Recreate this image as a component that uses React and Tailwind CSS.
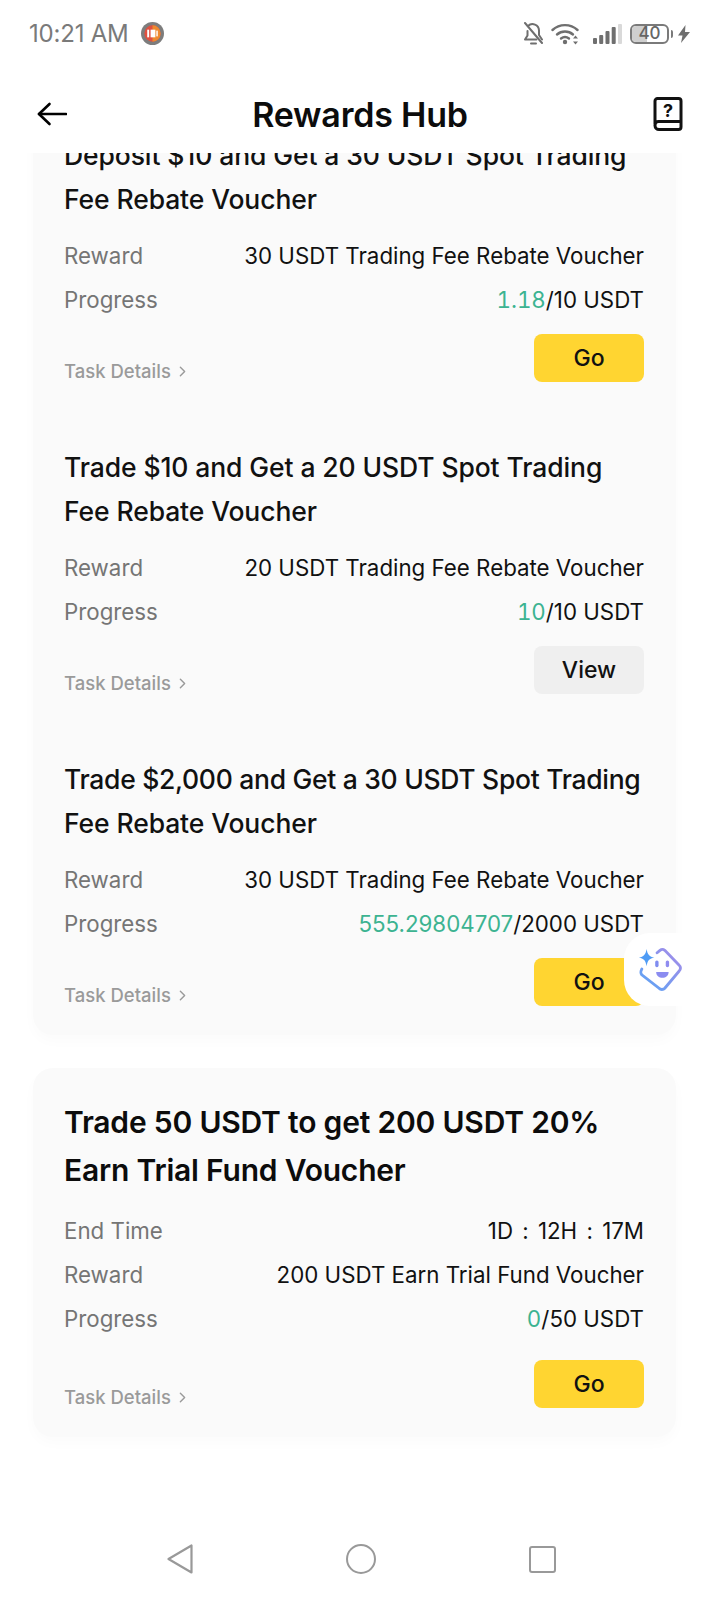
import React from 'react';
import { ChevronRight } from 'lucide-react';

const font = 'font-["Inter","Liberation_Sans",sans-serif]';

const tasks = [
  {
    title: ['Deposit $10 and Get a 30 USDT Spot Trading', 'Fee Rebate Voucher'],
    reward: '30 USDT Trading Fee Rebate Voucher',
    done: '1.18',
    total: '10',
    action: 'Go',
    titleClass: 'tracking-[-0.1px]',
  },
  {
    title: ['Trade $10 and Get a 20 USDT Spot Trading', 'Fee Rebate Voucher'],
    reward: '20 USDT Trading Fee Rebate Voucher',
    done: '10',
    total: '10',
    action: 'View',
    titleClass: 'tracking-[-0.1px]',
  },
  {
    title: ['Trade $2,000 and Get a 30 USDT Spot Trading', 'Fee Rebate Voucher'],
    reward: '30 USDT Trading Fee Rebate Voucher',
    done: '555.29804707',
    total: '2000',
    action: 'Go',
    titleClass: 'tracking-[-0.3px]',
  },
];

const StatusBar = () => (
  <div className="h-[66px] flex items-center justify-between pl-[29px] pr-[30px] pt-[1px] text-[#7a7a7a]">
    <div className="flex items-center gap-[12px]">
      <span className="text-[24px] font-normal tracking-[-0.2px]">10:21 AM</span>
      <svg width="23" height="23" viewBox="0 0 24 24">
        <circle cx="12" cy="12" r="12" fill="#7d7d7d" />
        <circle cx="12" cy="12" r="8.500" fill="#e0503f" />
        <path d="M12 3.500a8.500 8.500 0 0 1 0 17z" fill="#ee8a2f" />
        <rect x="6.500" y="8" width="2" height="8" fill="#fff" />
        <rect x="10" y="8" width="5" height="8" fill="#fff" />
        <rect x="16" y="9" width="1.500" height="6" fill="#fff" />
      </svg>
    </div>
    <div className="flex items-center">
      <svg width="21" height="23" viewBox="0 0 21 23" fill="none" stroke="#6f6f6f" strokeWidth="2" strokeLinecap="round" strokeLinejoin="round">
        <path d="M5 4a6.500 6.500 0 0 1 11 4.500V13l3 4.500M13.500 17.500H2l2.500-4V9" />
        <path d="M8 21.500h5" />
        <path d="M2 1l17 20" />
      </svg>
      <svg className="ml-[7px]" width="28" height="22" viewBox="0 0 28 22" fill="none" stroke="#6f6f6f" strokeWidth="2.400" strokeLinecap="round">
        <path d="M1.500 7c7-6.500 18-6.500 25 0" />
        <path d="M6 11.500c4.500-4 11.500-4 16 0" />
        <path d="M10 15.500c2.500-2 5.500-2 8 0" />
        <circle cx="14" cy="19" r="2.200" fill="#6f6f6f" stroke="none" />
        <path d="M24.500 12.500l2.500 3h-5zM24.500 21.500l2.500-3h-5z" fill="#6f6f6f" stroke="none" />
      </svg>
      <svg className="ml-[14px]" width="29" height="20" viewBox="0 0 29 20">
        <rect x="0" y="14" width="4" height="6" rx="1" fill="#6f6f6f" />
        <rect x="6.200" y="11" width="4" height="9" rx="1" fill="#6f6f6f" />
        <rect x="12.500" y="7" width="4" height="13" rx="1" fill="#6f6f6f" />
        <rect x="18.700" y="3" width="4" height="17" rx="1" fill="#6f6f6f" />
        <rect x="25" y="0" width="4" height="20" rx="1" fill="#d9d9d9" />
      </svg>
      <div className="ml-[8px] relative w-[39px] h-[20px] border-2 border-[#7a7a7a] rounded-[6px] overflow-hidden flex items-center justify-center">
        <div className="absolute left-0 top-0 bottom-0 w-[15px] bg-[#cfcfcf]" />
        <span className="relative text-[17px] leading-none font-medium text-[#666666]">40</span>
      </div>
      <div className="ml-[2px] w-[2px] h-[8px] bg-[#7a7a7a] rounded-r" />
      <svg className="ml-[5px]" width="12" height="18" viewBox="0 0 12 18">
        <path d="M7.500 0L0 10.500h4.500L3 18l9-11H7z" fill="#6f6f6f" />
      </svg>
    </div>
  </div>
);

const Header = () => (
  <div className="h-[87px] relative flex items-center justify-between px-[37px] pt-[9px] bg-white z-10">
    <svg width="30" height="24" viewBox="0 0 30 24" fill="none" stroke="#000" strokeWidth="2.600" strokeLinecap="round" strokeLinejoin="round">
      <path d="M29 12H2" />
      <path d="M12.500 2L2 12l10.500 10" />
    </svg>
    <h1 className="text-[34px] font-semibold text-[#0c0c0c] tracking-[-0.2px]">Rewards Hub</h1>
    <svg width="30" height="34" viewBox="0 0 30 34" fill="none" stroke="#111" strokeWidth="3" strokeLinejoin="round">
      <path d="M2 27V4a2.500 2.500 0 0 1 2.500-2.500h21a2.500 2.500 0 0 1 2.500 2.500v26a2.500 2.500 0 0 1-2.500 2.500H6a4 4 0 0 1-4-4v-.5a3.500 3.500 0 0 1 3.500-3.500H28" />
      <text x="15" y="20" textAnchor="middle" fontSize="18" fontWeight="700" fill="#111" stroke="none">?</text>
    </svg>
  </div>
);

const Row = ({ label, children }) => (
  <div className="h-[44px] flex items-center justify-between text-[22.300px]">
    <span className="text-[#757575]">{label}</span>
    <span className="text-[#111111]">{children}</span>
  </div>
);

const Progress = ({ done, total }) => (
  <Row label="Progress">
    <span className={done.length > 5 ? 'text-[#3cb391]' : 'text-[#3cb391] tabular-nums'}>{done}</span>/{total} USDT
  </Row>
);

const Footer = ({ action }) => (
  <div className="flex items-start justify-between">
    <div className="flex items-center gap-[3px] text-[#9a9a9a] text-[18.500px] leading-[22px] font-medium pt-[26px]">
      Task Details
      <ChevronRight size={17} strokeWidth={2} />
    </div>
    <button
      className={
        action === 'Go'
          ? 'w-[110px] h-[48px] rounded-[8px] bg-[#ffd531] text-[23px] font-medium text-[#111111]'
          : 'w-[110px] h-[48px] rounded-[8px] bg-[#efefef] text-[23px] font-medium text-[#111111]'
      }
    >
      {action}
    </button>
  </div>
);

const TaskItem = ({ task }) => (
  <div className="pt-[22px] pb-[41px] last:pb-[29px]">
    <div className="text-[26.500px] leading-[44px] font-medium text-[#111111] whitespace-nowrap">
      <div className={task.titleClass}>{task.title[0]}</div>
      <div className="tracking-[-0.1px]">{task.title[1]}</div>
    </div>
    <div className="mt-[13px]">
      <Row label="Reward">{task.reward}</Row>
      <Progress done={task.done} total={task.total} />
    </div>
    <div className="mt-[12px]">
      <Footer action={task.action} />
    </div>
  </div>
);

export default function App() {
  return (
    <div className={`${font} w-[720px] h-[1600px] bg-white flex flex-col overflow-hidden relative`}>
      <StatusBar />
      <Header />

      <div className="h-[1337px] overflow-hidden">
        <div className="-mt-[42px] ml-[33px] mr-[44px]">
          <div className="bg-[#fafafa] rounded-[20px] pl-[31px] pr-[32px] shadow-[0_6px_14px_rgba(0,0,0,0.02)]">
            {tasks.map((task) => (
              <TaskItem key={task.title[0]} task={task} />
            ))}
          </div>

          <div className="mt-[33px] bg-[#fafafa] rounded-[20px] pl-[31px] pr-[32px] pt-[30px] pb-[29px] shadow-[0_6px_14px_rgba(0,0,0,0.02)]">
            <div className="text-[30px] leading-[48px] font-semibold text-[#0c0c0c] tracking-[-0.2px] whitespace-nowrap">
              <div>Trade 50 USDT to get 200 USDT 20%</div>
              <div>Earn Trial Fund Voucher</div>
            </div>
            <div className="mt-[15px]">
              <Row label="End Time">
                <span className="[word-spacing:3px] [font-feature-settings:'calt'_0]">1D : 12H : 17M</span>
              </Row>
              <Row label="Reward">200 USDT Earn Trial Fund Voucher</Row>
              <Progress done="0" total="50" />
            </div>
            <div className="mt-[19px]">
              <Footer action="Go" />
            </div>
          </div>
        </div>
      </div>

      <div className="flex-1 flex items-center justify-between pl-[167px] pr-[164px] pt-[28px]">
        <svg width="26" height="30" viewBox="0 0 26 30" fill="none" stroke="#999999" strokeWidth="2.200" strokeLinejoin="round">
          <path d="M24.500 1.500v27L1.500 15z" />
        </svg>
        <div className="w-[30px] h-[30px] rounded-full border-[2.200px] border-[#999999]" />
        <div className="w-[27px] h-[27px] rounded-[3px] border-[2.200px] border-[#999999]" />
      </div>

      {/* AI assistant bubble */}
      <div className="absolute left-[624px] top-[933px] w-[96px] h-[73px] bg-white rounded-l-[26px] flex items-center pl-[13px]">
        <svg width="46" height="46" viewBox="0 0 48 48" fill="none">
          <defs>
            <linearGradient id="bot" x1="0" y1="1" x2="1" y2="0">
              <stop offset="0" stopColor="#5aa5f5" />
              <stop offset="1" stopColor="#a78be8" />
            </linearGradient>
          </defs>
          <path d="M21 6l3-2.500a4 4 0 0 1 5 0L44 19a4 4 0 0 1 0 6L29 43a4 4 0 0 1-6 0L5 29c-1.500-2-1.500-3 0-6" stroke="url(#bot)" strokeWidth="3" strokeLinecap="round" />
          <path d="M10 2c1 6 3 8 8 9-5 1-7 3-8 9-1-6-3-8-8-9 5-1 7-3 8-9z" fill="#4f9cf5" />
          <rect x="19" y="14" width="3.500" height="7" rx="1.700" fill="#7f8cf0" />
          <rect x="30" y="14" width="3.500" height="7" rx="1.700" fill="#8f8cf0" />
          <path d="M20 26h13c0 4-3 6-6.500 6S20 30 20 26z" fill="#8b8cf0" />
        </svg>
      </div>
    </div>
  );
}
